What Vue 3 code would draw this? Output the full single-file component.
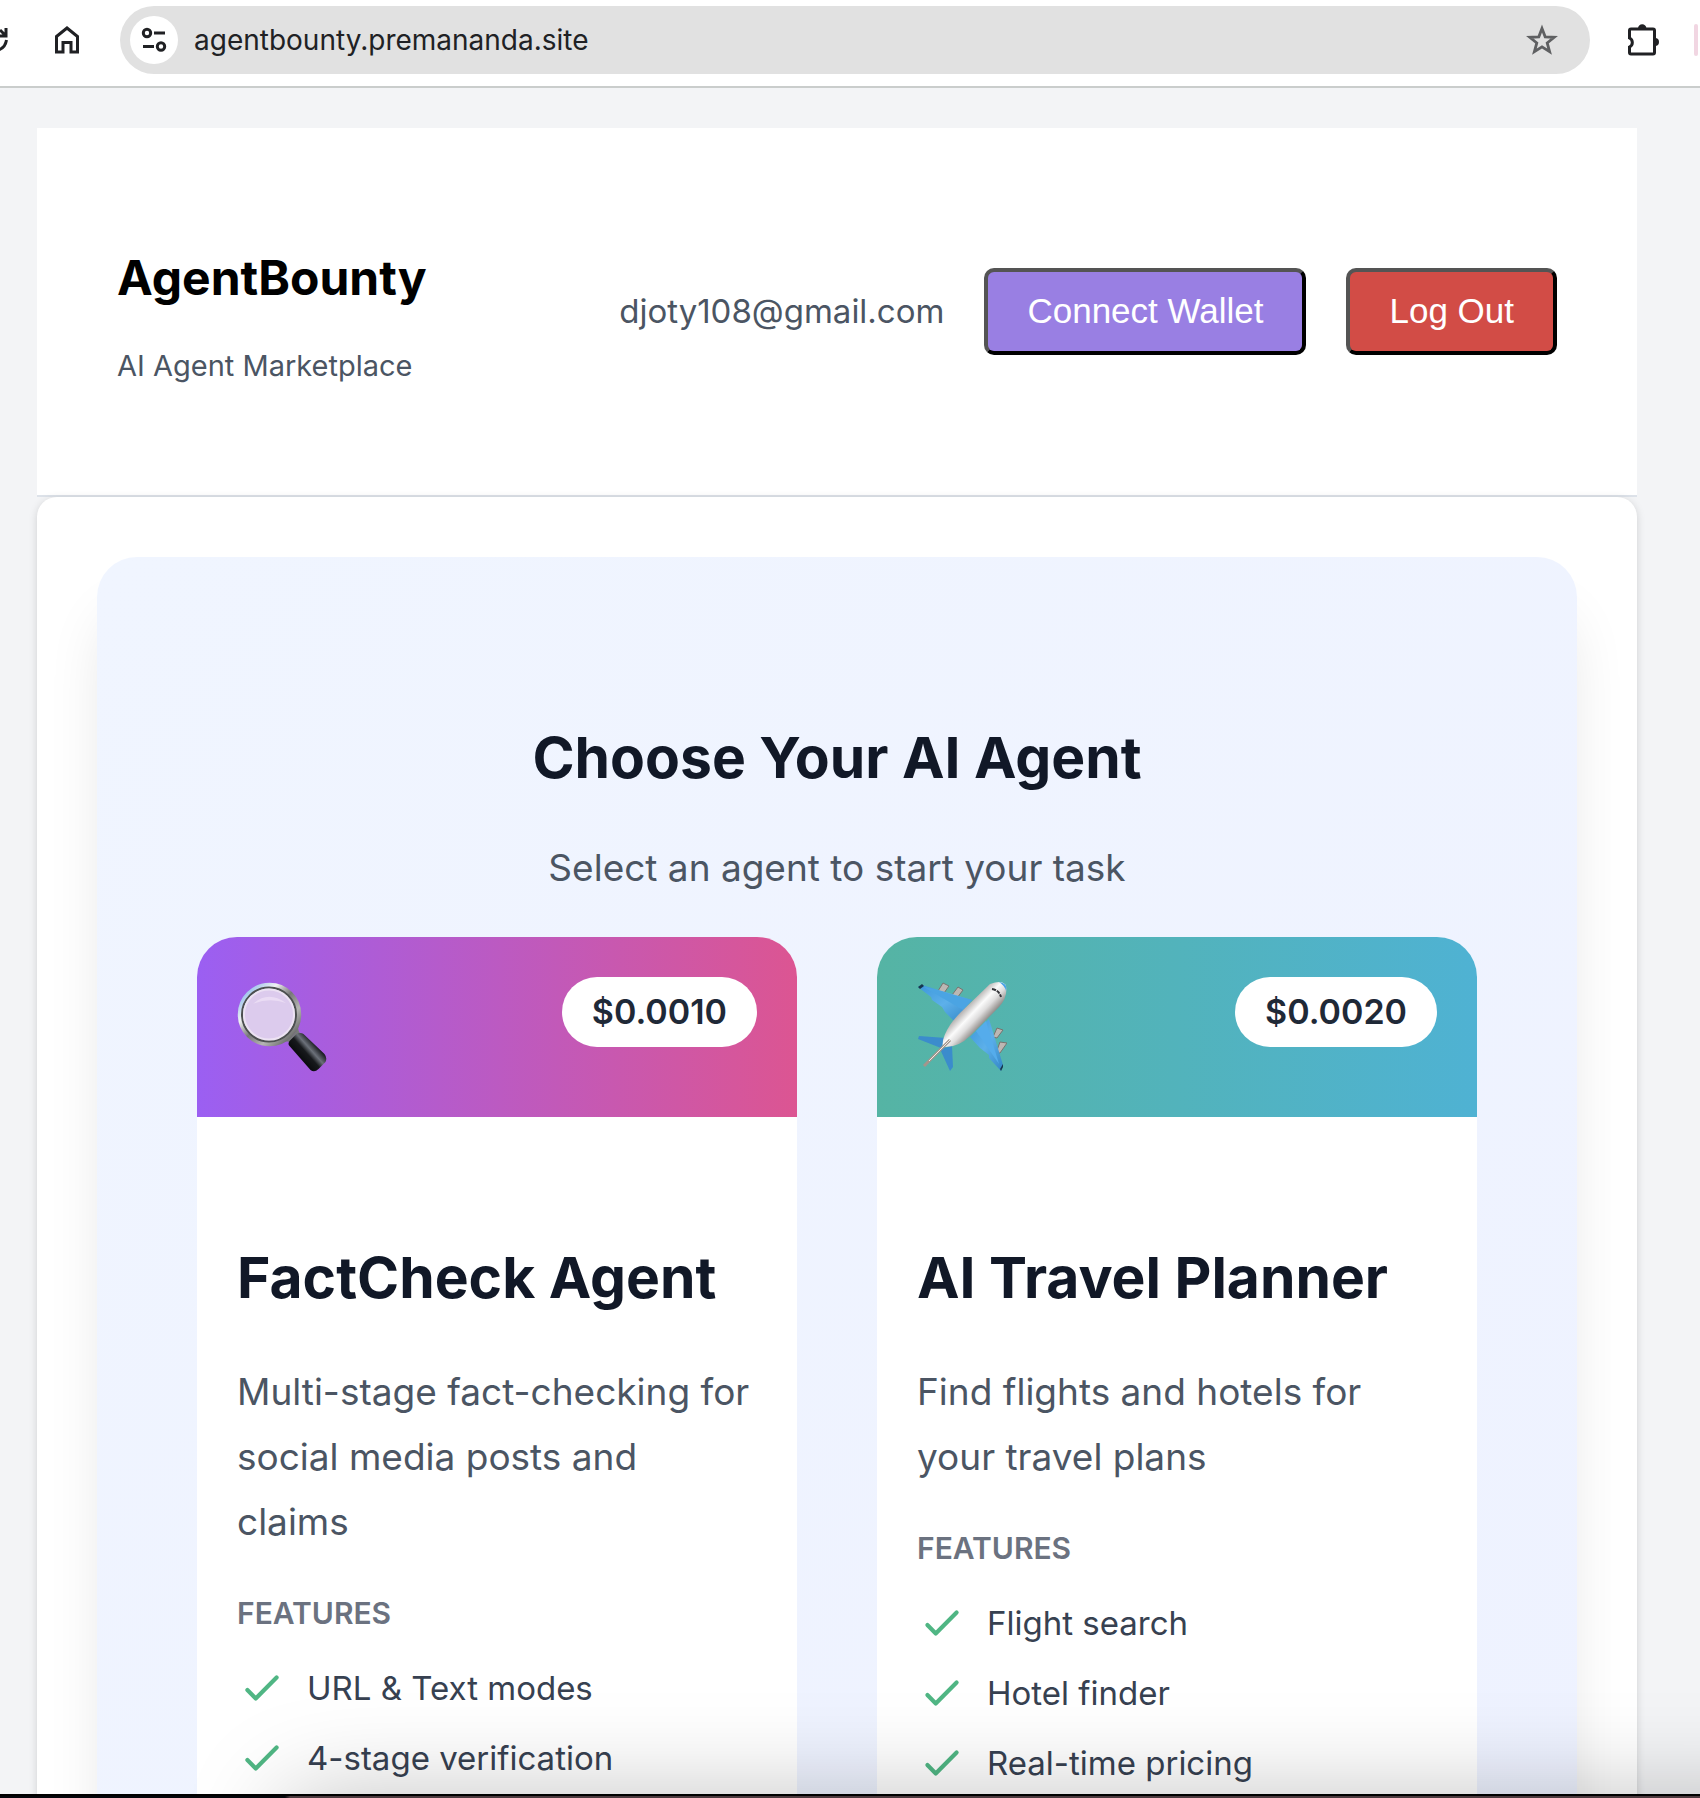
<script setup>
const agents = [
  {
    id: 'factcheck',
    icon: 'magnifier',
    price: '$0.0010',
    name: 'FactCheck Agent',
    description: 'Multi-stage fact-checking for social media posts and claims',
    features: ['URL & Text modes', '4-stage verification'],
  },
  {
    id: 'travel',
    icon: 'plane',
    price: '$0.0020',
    name: 'AI Travel Planner',
    description: 'Find flights and hotels for your travel plans',
    features: ['Flight search', 'Hotel finder', 'Real-time pricing'],
  },
]
</script>

<template>
  <div class="window">
    <nav class="toolbar" aria-label="Browser toolbar">
      <button class="tool reload" aria-label="Reload">
        <svg width="8" height="32" viewBox="0 0 8 32" fill="none" stroke="#202124" stroke-width="3">
          <path d="M6 4v8H-2M0 6l6 6M6.500 16C5.500 22 2 25-2 26" />
        </svg>
      </button>
      <button class="tool home" aria-label="Home">
        <svg width="26" height="30" viewBox="0 0 26 30" fill="none" stroke="#202124" stroke-width="3">
          <path d="M2.500 11.500 13 3l10.500 8.500v15.500H17V17.500H9V27H2.500z" />
        </svg>
      </button>
      <div class="omnibox">
        <button class="site-info" aria-label="View site information">
          <svg width="26" height="28" viewBox="0 0 26 28" fill="none" stroke="#202124" stroke-width="3">
            <circle cx="6" cy="7" r="3.700" />
            <path d="M13 7h11M2 20.500h11" />
            <circle cx="20" cy="20.500" r="3.700" />
          </svg>
        </button>
        <input class="url" type="text" value="agentbounty.premananda.site" aria-label="Address" />
        <button class="tool star" aria-label="Bookmark this page">
          <svg width="32" height="32" viewBox="0 0 32 32" fill="none" stroke="#5f6062" stroke-width="2.800">
            <path d="M16 4.500l3.200 8.300 9 .5-7 5.600 2.400 8.800L16 22.800l-7.600 4.900 2.400-8.800-7-5.600 9-.5z" />
          </svg>
        </button>
      </div>
      <button class="tool puzzle" aria-label="Extensions">
        <svg width="34" height="34" viewBox="0 2 34 34">
          <path
            d="M5 8h22q1.500 0 1.500 1.500v22q0 1.500-1.500 1.500H5q-1.500 0-1.500-1.500v-5.500a5 5 0 0 0 0-9V9.500q0-1.500 1.500-1.500z"
            fill="none"
            stroke="#202124"
            stroke-width="3"
          />
          <path d="M12 7.500a4.200 4.200 0 0 1 8.400 0zM29 17a4 4 0 0 1 0 8z" fill="#202124" />
        </svg>
      </button>
      <span class="marker"></span>
    </nav>

    <main class="page">
      <header class="site-header">
        <div class="brand">
          <h1>AgentBounty</h1>
          <p>AI Agent Marketplace</p>
        </div>
        <div class="account">
          <span class="email">djoty108@gmail.com</span>
          <button class="btn wallet">Connect Wallet</button>
          <button class="btn logout">Log Out</button>
        </div>
      </header>

      <section class="panel">
        <div class="picker">
          <h2>Choose Your AI Agent</h2>
          <p class="lead">Select an agent to start your task</p>
          <div class="cards">
            <article v-for="agent in agents" :key="agent.id" class="card">
              <div class="banner" :class="agent.id">
                <svg v-if="agent.icon === 'magnifier'" width="90" height="96" viewBox="0 0 90 96">
                  <defs>
                    <linearGradient id="rim" x1="0" y1="0" x2="1" y2="1">
                      <stop offset="0.1" stop-color="#9fc4ec" />
                      <stop offset=".3" stop-color="#f0f1f2" />
                      <stop offset=".5" stop-color="#777" />
                      <stop offset=".7" stop-color="#b6b6b4" />
                      <stop offset="1" stop-color="#454747" />
                    </linearGradient>
                    <linearGradient id="grip" gradientUnits="userSpaceOnUse" x1="62" y1="82" x2="80" y2="66">
                      <stop offset="0" stop-color="#08090c" />
                      <stop offset=".4" stop-color="#17191c" />
                      <stop offset=".62" stop-color="#6c717a" />
                      <stop offset=".9" stop-color="#1b1d22" />
                    </linearGradient>
                  </defs>
                  <path d="M46 65q12-4 15-16 0 6 3 8l-10 9q-4-3-8-1z" fill="#777a79" />
                  <circle cx="32.500" cy="37.500" r="28.500" fill="#dccbed" stroke="url(#rim)" stroke-width="6.500" />
                  <circle cx="32" cy="37.500" r="27" fill="none" stroke="#4c4f50" stroke-width="2" />
                  <circle cx="32" cy="37.500" r="25" fill="none" stroke="#ece2f3" stroke-width="2" />
                  <path d="M16 27q15-14 33-1-17-6-33 1z" fill="#eadcf4" />
                  <path
                    d="M52.500 69q-2-2 0-5l7-7q4-2 7 0l21 20q3 4 1 8l-7 7q-4 4-8 1z"
                    fill="url(#grip)"
                  />
                </svg>
                <svg v-else width="90" height="96" viewBox="0 0 90 96">
                  <defs>
                    <linearGradient id="hull" gradientUnits="userSpaceOnUse" x1="43" y1="34" x2="62" y2="52">
                      <stop offset="0" stop-color="#a9a5a3" />
                      <stop offset=".4" stop-color="#fbfbfb" />
                      <stop offset=".65" stop-color="#dedddd" />
                      <stop offset="1" stop-color="#8a8582" />
                    </linearGradient>
                    <linearGradient id="wing" x1="0" y1="0" x2="1" y2="1">
                      <stop offset="0" stop-color="#3c97da" />
                      <stop offset=".5" stop-color="#5db0ea" />
                      <stop offset="1" stop-color="#3286c6" />
                    </linearGradient>
                  </defs>
                  <g fill="#bcb7b3" stroke="#77736f" stroke-width="1">
                    <path d="M21 14l5-8 6 3-5 7z" />
                    <path d="M35 18l6-8 5 3-6 8z" />
                    <path d="M76 60l4-9 6 2-6 8z" />
                    <path d="M79 76l4-11 7 1-7 10z" />
                  </g>
                  <path d="M1 10l4-2 50 15-18 21-9-9-3-5-10-7-1-3z" fill="url(#wing)" />
                  <path d="M5 9l50 14-9 10z" fill="#4ba4e3" />
                  <path d="M1 10l4-3 2 2-4 3z" fill="#17364e" />
                  <path d="M72 42l14 46-2 6-12-13v-3l-9-7-10-11z" fill="url(#wing)" />
                  <path d="M69 44l13 43-23-33z" fill="#55aceb" />
                  <path d="M83 92l3-5v3l-2 4z" fill="#17364e" />
                  <path d="M1 62l1-3 27 2-5 10z" fill="#3b8ccc" />
                  <path d="M23 72l12-3 1 21-3 4z" fill="#3b8ccc" />
                  <path d="M73 7Q86 2 89 9q2 11-7 21L53 59Q41 71 26 70q-2-8 7-22 4-6 11-13z" fill="url(#hull)" />
                  <path d="M82 5q9 1 7 9-1-5-7-9z" fill="#49a5e8" />
                  <path d="M75 12q7 1 9 8" fill="none" stroke="#35353a" stroke-width="2" stroke-dasharray="4 1" />
                  <path d="M33 63L7 89" fill="none" stroke="#a4958b" stroke-width="3" />
                  <path d="M33 63L12 84" fill="none" stroke="#eceae8" stroke-width="1" />
                </svg>
                <span class="price">{{ agent.price }}</span>
              </div>
              <div class="body">
                <h3>{{ agent.name }}</h3>
                <p class="description">{{ agent.description }}</p>
                <h4>FEATURES</h4>
                <ul>
                  <li v-for="feature in agent.features" :key="feature">
                    <svg width="50" height="50" viewBox="0 0 24 24" fill="none" stroke="#50b684" stroke-width="2" stroke-linecap="round" stroke-linejoin="round">
                      <path d="M5 13l4 4L19 7" />
                    </svg>
                    {{ feature }}
                  </li>
                </ul>
              </div>
            </article>
          </div>
        </div>
      </section>
    </main>

    <div class="shade"></div>
    <div class="edge"></div>
  </div>
</template>

<style>
body {
  margin: 0;
  background: #f3f4f6;
}
</style>

<style scoped>
.window {
  position: relative;
  display: flex;
  flex-direction: column;
  height: 100vh;
  overflow: hidden;
  font-family: Inter, "Liberation Sans", sans-serif;
  background: #f3f4f6;
}

h1, h2, h3, h4, p, ul {
  margin: 0;
  padding: 0;
}

.toolbar {
  display: flex;
  flex: none;
  align-items: center;
  height: 80px;
  padding-bottom: 6px;
  border-bottom: 2px solid #cacdcc;
  background: #fff;
}

.tool,
.site-info {
  display: flex;
  flex: none;
  align-items: center;
  justify-content: center;
  padding: 0;
  border: 0;
  background: none;
}

.home {
  margin: 0 40px 0 46px;
}

.omnibox {
  display: flex;
  flex: 1;
  align-items: center;
  box-sizing: border-box;
  min-width: 0;
  height: 68px;
  padding: 0 32px 0 10px;
  border-radius: 34px;
  background: #e1e1e1;
}

.site-info {
  width: 48px;
  height: 48px;
  border-radius: 50%;
  background: #fff;
}

.url {
  flex: 1;
  min-width: 0;
  margin-left: 16px;
  padding: 0;
  border: 0;
  outline: 0;
  background: none;
  color: #202124;
  font: 28px/40px Inter, "Liberation Sans", sans-serif;
}

.puzzle {
  margin: 0 34px 0 36px;
}

.marker {
  flex: none;
  width: 4px;
  height: 32px;
  margin-right: 2px;
  border-radius: 2px;
  background: #f1d6e2;
}

.page {
  flex: 1;
  min-height: 0;
  padding: 40px 63px 0 37px;
  overflow: hidden;
}

.site-header {
  display: flex;
  align-items: center;
  justify-content: space-between;
  padding: 110px 80px 111px;
  border-bottom: 2px solid #dde2e9;
  background: #fff;
}

.brand {
  padding-top: 4px;
}

.brand h1 {
  margin-bottom: 34px;
  color: #000;
  font-size: 48px;
  font-weight: 700;
  line-height: 72px;
}

.brand p {
  color: #4b5563;
  font-size: 29px;
  line-height: 36px;
}

.account {
  display: flex;
  align-items: center;
  gap: 40px;
}

.email {
  color: #4b5563;
  font-size: 33px;
  line-height: 50px;
}

.btn {
  padding: 19px 39px 21px;
  border: 4px outset #000;
  border-radius: 10px;
  color: #fff;
  font: 35px/39px "Liberation Sans", Arial, sans-serif;
}

.wallet {
  background: #997fe3;
}

.logout {
  background: #d24c46;
}

.panel {
  padding: 60px;
  border-radius: 20px;
  background: #fff;
  box-shadow: 0 2px 8px rgba(0, 0, 0, 0.15);
}

.picker {
  padding: 156px 100px 100px;
  border-radius: 40px;
  background: linear-gradient(to bottom right, #f0f5ff, #eef2ff);
  box-shadow: 0 50px 62px -12px rgba(0, 0, 0, 0.12);
  text-align: center;
}

.picker h2,
.body h3 {
  color: #111827;
  font-size: 57px;
  font-weight: 700;
  line-height: 90px;
}

.lead {
  margin: 35px 0 39px;
  color: #4b5563;
  font-size: 37px;
  line-height: 60px;
}

.cards {
  display: grid;
  grid-template-columns: 1fr 1fr;
  gap: 80px;
  text-align: left;
}

.card {
  overflow: hidden;
  border-radius: 40px;
  background: #fff;
}

.banner {
  display: flex;
  align-items: flex-start;
  justify-content: space-between;
  box-sizing: border-box;
  height: 180px;
  padding: 40px;
}

.factcheck {
  background: linear-gradient(to right, #9b5ff2, #dc5592);
}

.travel {
  background: linear-gradient(to right, #55b4a4, #4fb2d3);
}

.price {
  padding: 10px 30px;
  border-radius: 35px;
  background: #fff;
  color: #1f2937;
  font-size: 34px;
  font-weight: 600;
  line-height: 50px;
}

.body {
  padding: 116px 40px 60px;
}

.description {
  margin: 36px 0 34px;
  color: #4b5563;
  font-size: 37px;
  line-height: 65px;
}

.body h4 {
  margin-bottom: 25px;
  color: #6b7280;
  font-size: 30px;
  font-weight: 600;
  line-height: 50px;
}

.body ul {
  display: flex;
  flex-direction: column;
  gap: 20px;
  list-style: none;
}

.body li {
  display: flex;
  gap: 20px;
  color: #374151;
  font-size: 33px;
  line-height: 50px;
}

/* Shadow cast upwards by the window that sits below this one */
.shade {
  position: absolute;
  right: -120px;
  bottom: -200px;
  left: 285px;
  height: 200px;
  border-radius: 20px;
  box-shadow: 0 0 100px rgba(0, 0, 0, 0.25);
  pointer-events: none;
}

.edge {
  position: relative;
  flex: none;
  box-sizing: border-box;
  height: 4px;
  border-top: 2px solid #000;
  background: linear-gradient(to right, #05060b 285px, #4b3a3e 290px);
}
</style>
